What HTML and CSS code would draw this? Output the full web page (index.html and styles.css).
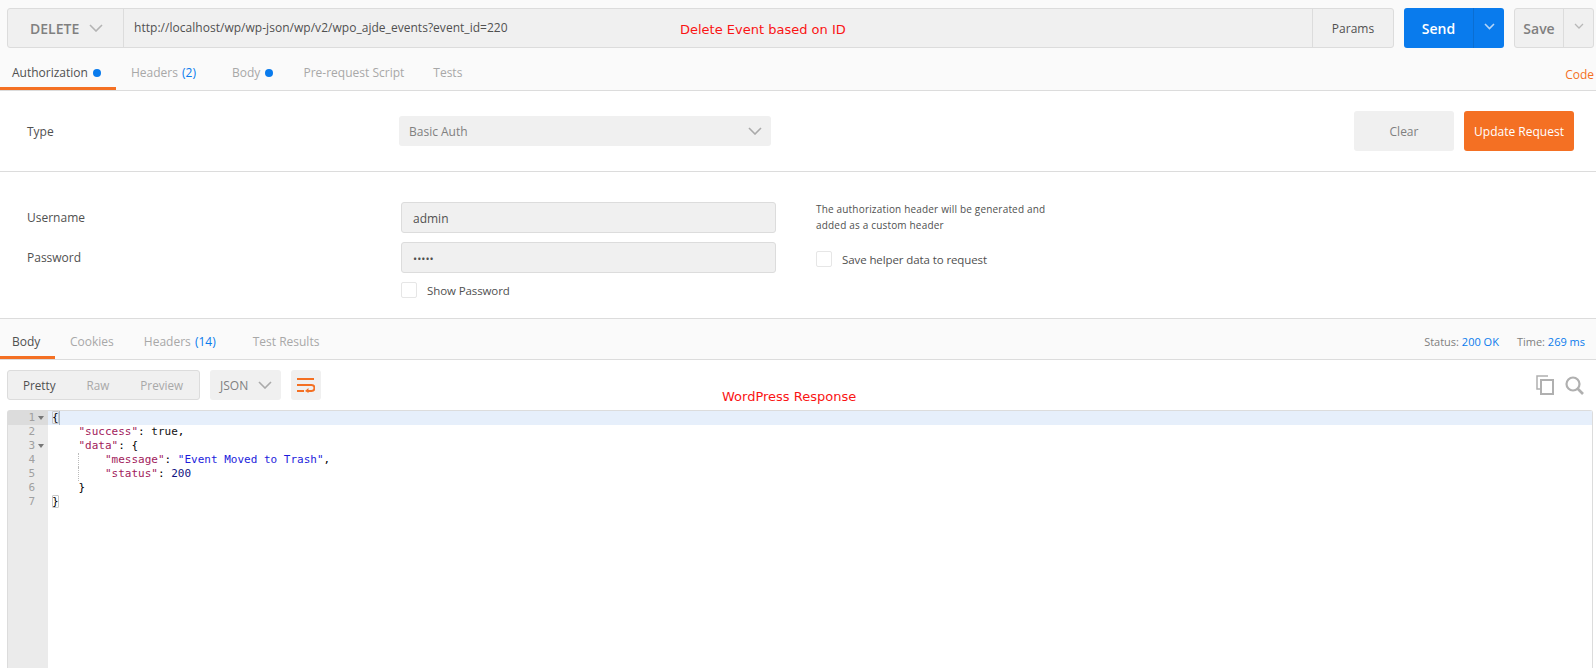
FILE: index.html
```html
<!DOCTYPE html>
<html lang="en">
<head>
<meta charset="utf-8">
<title>Delete Event based on ID</title>
<link rel="stylesheet" href="styles.css">
</head>
<body>
<div class="page">
  <header class="request">
    <div class="urlrow">
      <div class="urlbox">
        <div class="method"><span>DELETE</span>
          <svg class="chev" width="14" height="8" viewBox="0 0 14 8"><path d="M1 1l6 6 6-6" fill="none" stroke="#b4b4b4" stroke-width="1.6"/></svg>
        </div>
        <div class="url">http://localhost/wp/wp-json/wp/v2/wpo_ajde_events?event_id=220</div>
        <div class="params">Params</div>
      </div>
      <div class="send">
        <div class="send-main">Send</div>
        <div class="send-drop"><svg width="11" height="7" viewBox="0 0 11 7"><path d="M1 1l4.500 4.500L10 1" fill="none" stroke="#b5d5f7" stroke-width="1.6"/></svg></div>
      </div>
      <div class="save">
        <div class="save-main">Save</div>
        <div class="save-drop"><svg width="10" height="6" viewBox="0 0 10 6"><path d="M1 1l4 4 4-4" fill="none" stroke="#b8b8b8" stroke-width="1.3"/></svg></div>
      </div>
    </div>
    <nav class="tabs reqtabs">
      <div class="tab active auth">Authorization <i class="dot"></i></div>
      <div class="tab hdr">Headers <b class="count">(2)</b></div>
      <div class="tab bodytab">Body <i class="dot"></i></div>
      <div class="tab script">Pre-request Script</div>
      <div class="tab">Tests</div>
      <div class="code">Code</div>
    </nav>
  </header>

  <section class="typerow">
    <div class="label type-label">Type</div>
    <div class="select"><span>Basic Auth</span>
      <svg width="14" height="8" viewBox="0 0 14 8"><path d="M1 1l6 6 6-6" fill="none" stroke="#aaa" stroke-width="1.6"/></svg>
    </div>
    <div class="spacer"></div>
    <div class="btn clear">Clear</div>
    <div class="btn update">Update Request</div>
  </section>

  <section class="creds">
    <div class="labels">
      <div class="label">Username</div>
      <div class="label">Password</div>
    </div>
    <div class="fields">
      <div class="input">admin</div>
      <div class="input pw">•••••</div>
      <div class="check"><i class="box"></i>Show Password</div>
    </div>
    <div class="helper">
      <p>The authorization header will be generated and<br>added as a custom header</p>
      <div class="check"><i class="box"></i>Save helper data to request</div>
    </div>
  </section>

  <nav class="tabs restabs">
    <div class="tab active rbody">Body</div>
    <div class="tab cookies">Cookies</div>
    <div class="tab rhdr">Headers <b class="count">(14)</b></div>
    <div class="tab">Test Results</div>
    <div class="meta">Status: <b>200 OK</b><span class="time">Time: <b>269 ms</b></span></div>
  </nav>

  <div class="toolbar">
    <div class="views"><span class="on">Pretty</span><span>Raw</span><span>Preview</span></div>
    <div class="format"><span>JSON</span>
      <svg width="14" height="8" viewBox="0 0 14 8"><path d="M1 1l6 6 6-6" fill="none" stroke="#aaa" stroke-width="1.6"/></svg>
    </div>
    <div class="wrap">
      <svg width="18" height="16" viewBox="0 0 18 16"><path d="M0 2h17M0 8h14.500a2.700 2.700 0 0 1 0 6H10M0 14h7" fill="none" stroke="#f47023" stroke-width="2"/><path d="M11.500 11l-3.500 3 3.500 2z" fill="#f47023"/></svg>
    </div>
    <div class="tools">
      <svg width="18" height="20" viewBox="0 0 18 20"><path d="M12 1H1v13h3" fill="none" stroke="#b0b0b0" stroke-width="1.500"/><rect x="5" y="5" width="12" height="14" fill="none" stroke="#b0b0b0" stroke-width="2"/></svg>
      <svg width="19" height="19" viewBox="0 0 19 19"><circle cx="8" cy="8" r="6.500" fill="none" stroke="#b0b0b0" stroke-width="2.200"/><path d="M12.500 12.500L18 18" stroke="#b0b0b0" stroke-width="2.600"/></svg>
    </div>
  </div>

  <div class="editor">
    <div class="gutter">
      <div class="ln cur">1<i class="fold"></i></div>
      <div class="ln">2</div>
      <div class="ln">3<i class="fold"></i></div>
      <div class="ln">4</div>
      <div class="ln">5</div>
      <div class="ln">6</div>
      <div class="ln">7</div>
    </div>
    <div class="src">
      <div class="line cur"><span class="mb">{</span><i class="caret"></i></div>
      <div class="line">    <span class="k">"success"</span>: <span class="t">true</span>,</div>
      <div class="line">    <span class="k">"data"</span>: {</div>
      <div class="line guide">        <span class="k">"message"</span>: <span class="s">"Event Moved to Trash"</span>,</div>
      <div class="line guide">        <span class="k">"status"</span>: <span class="n">200</span></div>
      <div class="line">    }</div>
      <div class="line"><span class="mb">}</span></div>
    </div>
  </div>

  <div class="note note-top">Delete Event based on ID</div>
  <div class="note note-res">WordPress Response</div>
</div>
</body>
</html>
```

FILE: styles.css
```css
* { box-sizing: border-box; }
html, body { margin: 0; height: 100%; overflow: hidden; }
body { background: #fff; color: #505050; font-family: "Open Sans", sans-serif; font-size: 12px; }
.page { position: relative; width: 1596px; height: 668px; overflow: hidden; display: flex; flex-direction: column; }
i { display: inline-block; font-style: normal; }
b { font-weight: 400; }

.request { background: #fafafa; height: 91px; padding-top: 8px; border-bottom: 1px solid #dcdcdc; }
.urlrow { display: flex; height: 40px; padding-left: 7px; }
.urlbox { width: 1387px; height: 40px; display: flex; background: #f0f0f0; border: 1px solid #dcdcdc; border-radius: 3px; }
.method { width: 116px; border-right: 1px solid #dcdcdc; display: flex; align-items: center; padding-left: 22px; color: #808080; font-size: 14px; font-weight: 600; }
.method .chev { margin-left: 10px; }
.url { flex: 1; display: flex; align-items: center; padding: 0 0 2px 10px; font-size: 12px; letter-spacing: .03px; color: #505050; }
.params { width: 81px; border-left: 1px solid #dcdcdc; display: flex; align-items: center; justify-content: center; font-size: 12px; }
.send { width: 100px; height: 40px; margin-left: 10px; display: flex; background: #097bed; border-radius: 3px; color: #fff; font-size: 14px; font-weight: 600; }
.send-main { width: 69px; display: flex; align-items: center; justify-content: center; }
.send-drop { flex: 1; border-left: 1px solid #0a6ed2; display: flex; align-items: center; justify-content: center; padding-bottom: 4px; }
.save { width: 80px; height: 40px; margin-left: 10px; display: flex; background: #f0f0f0; border: 1px solid #dcdcdc; border-radius: 3px; color: #808080; font-size: 14px; font-weight: 600; }
.save-main { width: 48px; display: flex; align-items: center; justify-content: center; }
.save-drop { flex: 1; border-left: 1px solid #dcdcdc; display: flex; align-items: center; justify-content: center; padding-bottom: 4px; }

.tabs { display: flex; align-items: stretch; }
.reqtabs { height: 42px; padding-top: 8px; }
.tab { display: flex; align-items: center; padding: 2px 12px 0; color: #a8a8a8; font-size: 12px; white-space: pre; border-bottom: 3px solid transparent; }
.tab.active { color: #505050; border-bottom-color: #f47023; }
.tab.auth { width: 116px; margin-right: 3px; }
.tab.hdr { margin-right: 12px; }
.tab.bodytab { margin-right: 6px; }
.tab.script { margin-right: 5px; }
.dot { width: 8px; height: 8px; border-radius: 50%; background: #097bed; margin-left: 2px; }
.count { color: #097bed; margin-left: 1px; }
.code { margin-left: auto; padding: 9px 2px 0 0; color: #f47023; font-size: 12px; line-height: 20px; }

.typerow { height: 81px; display: flex; align-items: center; padding: 0 22px 0 27px; border-bottom: 1px solid #dcdcdc; }
.label { font-size: 12px; color: #505050; }
.type-label { width: 372px; }
.select { width: 372px; height: 30px; display: flex; align-items: center; justify-content: space-between; padding: 0 9px 0 10px; background: #f0f0f0; border-radius: 3px; color: #808080; }
.spacer { flex: 1; }
.btn { height: 40px; display: flex; align-items: center; justify-content: center; border-radius: 3px; }
.clear { width: 100px; background: #f0f0f0; color: #808080; margin-right: 10px; }
.update { width: 110px; background: #f47023; color: #fff; }

.creds { height: 147px; display: flex; padding: 30px 0 0 27px; border-bottom: 1px solid #dcdcdc; }
.labels { width: 374px; display: flex; flex-direction: column; gap: 24px; padding-top: 8px; }
.labels .label { height: 16px; line-height: 16px; }
.fields { width: 375px; }
.input { height: 31px; display: flex; align-items: center; padding: 1px 11px 0; margin-bottom: 9px; background: #f0f0f0; border: 1px solid #dcdcdc; border-radius: 3px; }
.pw { font-size: 11px; }
.check { display: flex; align-items: center; color: #505050; font-size: 11.5px; letter-spacing: -.1px; }
.box { width: 16px; height: 16px; margin-right: 10px; background: #fff; border: 1px solid #e6e6e6; border-radius: 2px; }
.helper { margin-left: 40px; }
.helper p { margin: -1px 0 18px; font-size: 10px; letter-spacing: .18px; line-height: 16px; color: #505050; }

.restabs { height: 41px; padding-top: 6px; background: #fafafa; border-bottom: 1px solid #dcdcdc; }
.rbody { width: 55px; margin-right: 3px; }
.cookies { margin-right: 6px; }
.rhdr { margin-right: 13px; }
.meta { margin-left: auto; padding: 0 11px 2px 0; display: flex; align-items: center; font-size: 11px; color: #808080; white-space: pre; }
.meta b { color: #097bed; }
.time { margin-left: 18px; }

.toolbar { height: 50px; display: flex; align-items: center; padding: 0 12px 0 7px; }
.views { width: 193px; height: 30px; display: flex; align-items: center; gap: 1px; background: #f0f0f0; border: 1px solid #dcdcdc; border-radius: 3px; color: #a8a8a8; font-size: 11.7px; }
.views span { padding: 0 15px; }
.views .on { color: #505050; }
.format { width: 71px; height: 30px; margin-left: 10px; display: flex; align-items: center; justify-content: space-between; padding: 0 9px 0 10px; background: #f0f0f0; border-radius: 3px; color: #808080; }
.wrap { width: 30px; height: 30px; margin-left: 10px; display: flex; align-items: center; justify-content: center; background: #f0f0f0; border-radius: 3px; }
.tools { margin-left: auto; display: flex; align-items: center; gap: 11px; }

.editor { flex: 1; display: flex; margin: 0 3px 0 7px; border: 1px solid #dcdcdc; border-bottom: 0; border-radius: 3px 3px 0 0; font: 11px/14px "DejaVu Sans Mono", monospace; }
.gutter { width: 40px; flex: none; background: #ebebeb; color: #a0a0a0; }
.ln { height: 14px; padding-right: 13px; text-align: right; position: relative; }
.ln.cur { background: #dcdcdc; }
.fold { position: absolute; right: 4px; top: 5px; border: 3px solid transparent; border-top: 4px solid #777; border-bottom: 0; }
.src { flex: 1; color: #000; }
.line { height: 14px; padding-left: 4px; white-space: pre; position: relative; }
.line.cur { background: #e6effb; }
.caret { width: 1px; height: 14px; vertical-align: top; background: #a9b8c8; }
.mb { outline: 1px solid #c8c8c8; outline-offset: -1px; border-radius: 1px; }
.guide::before { content: ""; position: absolute; left: 30px; top: 0; bottom: 0; border-left: 1px dotted #bbb; }
.k { color: #a11a5b; }
.t { color: #111; }
.s { color: #1c1cdc; }
.n { color: #11117f; }

.note { position: absolute; color: #fa1414; font-family: "DejaVu Sans", sans-serif; font-size: 13px; line-height: 16px; white-space: nowrap; }
.note-top { left: 680px; top: 22px; }
.note-res { left: 722px; top: 389px; }
```
